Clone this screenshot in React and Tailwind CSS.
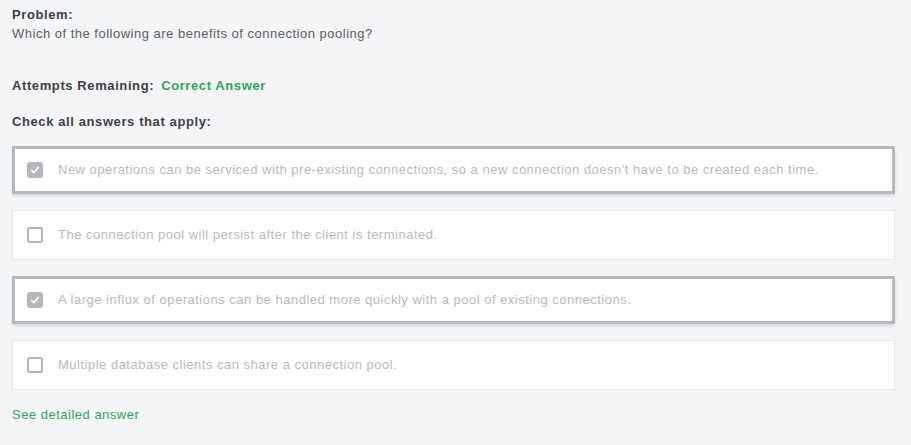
const OPTIONS = [
  { text: "New operations can be serviced with pre-existing connections, so a new connection doesn't have to be created each time.", checked: true },
  { text: "The connection pool will persist after the client is terminated.", checked: false },
  { text: "A large influx of operations can be handled more quickly with a pool of existing connections.", checked: true },
  { text: "Multiple database clients can share a connection pool.", checked: false },
];

function Box({ checked }) {
  if (checked) {
    return (
      <span className="grid h-4 w-4 shrink-0 place-items-center rounded-[3px] bg-[#b4b8bc]">
        <svg viewBox="0 0 16 16" className="h-3 w-3" fill="none" stroke="white" strokeWidth="2.2" strokeLinecap="round" strokeLinejoin="round">
          <path d="M3.5 8.5 6.5 11.5 12.5 4.5" />
        </svg>
      </span>
    );
  }
  return <span className="h-4 w-4 shrink-0 rounded-[3px] border-2 border-[#b3b3b3] bg-white" />;
}

export default function App() {
  return (
    <div className="min-h-screen bg-[#f4f5f7] px-3 pt-[6px] font-['Liberation_Sans',Arial,sans-serif] text-[13px] tracking-[0.5px]">
      <div className="font-bold leading-[18px] tracking-[0.6px] text-[#3c4147]">Problem:</div>
      <div className="mt-[1px] leading-[18px] text-[#5b5f63]">Which of the following are benefits of connection pooling?</div>

      <div className="mt-[34px] flex gap-[7px] font-bold leading-[18px] tracking-[0.6px]">
        <span className="text-[#3c4147]">Attempts Remaining:</span>
        <span className="text-[#2fa55a]">Correct Answer</span>
      </div>

      <div className="mt-[18px] font-bold leading-[18px] tracking-[0.6px] text-[#3c4147]">Check all answers that apply:</div>

      <div className="mt-[15px] flex w-[883px] flex-col gap-4">
        {OPTIONS.map((o, i) => (
          <div
            key={i}
            className={`flex items-center gap-[15px] bg-white ${
              o.checked
                ? "h-[48px] border-[3px] border-[#b4b9be] pl-3 shadow-[0_2px_3px_rgba(0,0,0,0.12)]"
                : "h-[50px] border border-[#e6e8eb] pl-[14px]"
            }`}
          >
            <Box checked={o.checked} />
            <span className="text-[#b7babd]">{o.text}</span>
          </div>
        ))}
      </div>

      <div className="mt-[16px] leading-[18px] text-[#3c9f63]">See detailed answer</div>
    </div>
  );
}
